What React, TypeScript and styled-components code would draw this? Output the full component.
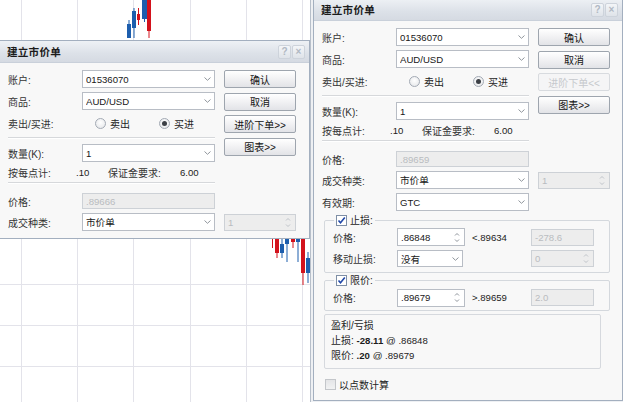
import React from 'react';
import styled, { createGlobalStyle } from 'styled-components';

const FONT = `"Liberation Sans", "Noto Sans CJK SC", sans-serif`;

const GlobalStyle = createGlobalStyle`
  html, body { margin: 0; padding: 0; background: #ffffff; }
  body { font-family: ${FONT}; }
  * { box-sizing: border-box; }
`;

const Desktop = styled.div`
  position: relative;
  width: 623px;
  height: 402px;
  overflow: hidden;
  background: #eef0f3;
  font-family: ${FONT};
`;

const ChartPane = styled.div`
  position: absolute;
  left: 0;
  top: 0;
  width: 311px;
  height: 402px;
  background: #ffffff;
  border-right: 1px solid #b7bfca;
`;

const Window = styled.div<{ $left: number; $top: number; $height: number }>`
  position: absolute;
  left: ${(p) => p.$left}px;
  top: ${(p) => p.$top}px;
  width: ${(p) => (p.$left < 0 ? 311 : 310)}px;
  height: ${(p) => p.$height}px;
  background: #f8f8f8;
  border: 1px solid #a3afbf;
  display: flex;
  flex-direction: column;
  overflow: hidden;
`;

const TitleBar = styled.div`
  height: 22px;
  flex: none;
  display: flex;
  align-items: center;
  padding: 0 4px 0 7px;
  background: linear-gradient(#eef1f5, #dce1e8 60%, #d5dae2);
  border-bottom: 1px solid #c9d0da;
`;

const TitleText = styled.span`
  flex: 1;
  font-size: 10.6px;
  font-weight: bold;
  color: #1b1b1b;
  letter-spacing: 0.2px;
`;

const TitleButton = styled.span`
  width: 13px;
  height: 14px;
  margin-left: 1px;
  border: 1px solid #cdd3db;
  border-radius: 2px;
  background: linear-gradient(#f3f5f8, #dfe3e9);
  color: #b0b8c3;
  font-size: 10px;
  line-height: 12px;
  text-align: center;
  font-weight: bold;
`;

const Body = styled.div`
  flex: 1;
  padding: 7px 8px 0 8px;
  display: flex;
  flex-direction: column;
`;

const TopBlock = styled.div`
  display: flex;
  gap: 9px;
`;

const FormCol = styled.div`
  width: 207px;
  display: flex;
  flex-direction: column;
`;

const ButtonCol = styled.div`
  width: 72px;
  display: flex;
  flex-direction: column;
  gap: 4.5px;
`;

const Row = styled.div<{ $h?: number; $mb?: number }>`
  display: flex;
  align-items: center;
  height: ${(p) => p.$h ?? 18}px;
  margin-bottom: ${(p) => p.$mb ?? 4}px;
  flex: none;
`;

const Label = styled.span<{ $w?: number }>`
  width: ${(p) => p.$w ?? 74}px;
  flex: none;
  font-size: 10px;
  color: #343434;
  white-space: nowrap;
`;

const Separator = styled.div<{ $mt: number; $mb: number }>`
  height: 2px;
  flex: none;
  margin-top: ${(p) => p.$mt}px;
  margin-bottom: ${(p) => p.$mb}px;
  border-top: 1px solid #d6d8db;
  border-bottom: 1px solid #ffffff;
`;

const ComboBox = styled.div<{ $w: number; $h?: number }>`
  width: ${(p) => p.$w}px;
  height: ${(p) => p.$h ?? 18}px;
  flex: none;
  display: flex;
  align-items: center;
  background: #ffffff;
  border: 1px solid #b8bdc5;
  padding-left: 3px;
`;

const FieldText = styled.span<{ $muted?: boolean }>`
  flex: 1;
  font-size: 9.6px;
  color: ${(p) => (p.$muted ? '#b9bcc0' : '#181818')};
  white-space: nowrap;
  overflow: hidden;
`;

const ArrowZone = styled.span`
  width: 14px;
  flex: none;
  display: flex;
  align-items: center;
  justify-content: center;
`;

const DisabledBox = styled.div<{ $w: number; $h?: number; $ml?: number }>`
  width: ${(p) => p.$w}px;
  height: ${(p) => p.$h ?? 16}px;
  margin-left: ${(p) => p.$ml ?? 0}px;
  flex: none;
  display: flex;
  align-items: center;
  background: #ededed;
  border: 1px solid #cdd1d6;
  padding-left: 3px;
`;

const SpinBox = styled.div<{ $w: number }>`
  width: ${(p) => p.$w}px;
  height: 18px;
  flex: none;
  display: flex;
  align-items: center;
  background: #ffffff;
  border: 1px solid #b8bdc5;
  padding-left: 3px;
`;

const PushButton = styled.div<{ $disabled?: boolean }>`
  width: 72px;
  height: 18px;
  flex: none;
  display: flex;
  align-items: center;
  justify-content: center;
  border: 1px solid ${(p) => (p.$disabled ? '#d8dbdf' : '#9ea5ae')};
  border-radius: 2px;
  background: ${(p) => (p.$disabled ? '#f5f5f6' : 'linear-gradient(#ffffff, #f1f1f3 50%, #e2e3e7)')};
  font-size: 10px;
  color: ${(p) => (p.$disabled ? '#c6c9cd' : '#141414')};
  white-space: nowrap;
`;

const RadioGroup = styled.div`
  display: flex;
  padding-left: 13px;
`;

const RadioItem = styled.div`
  width: 64px;
  display: flex;
  align-items: center;
  gap: 4px;
  font-size: 10px;
  color: #242424;
`;

const RadioDot = styled.span<{ $on?: boolean }>`
  width: 11px;
  height: 11px;
  border-radius: 50%;
  border: 1px solid #a3aab4;
  background: radial-gradient(circle at 50% 40%, #ffffff, #e2e4e7);
  display: flex;
  align-items: center;
  justify-content: center;
  &::after {
    content: '';
    display: ${(p) => (p.$on ? 'block' : 'none')};
    width: 5px;
    height: 5px;
    border-radius: 50%;
    background: #3b3f45;
  }
`;

const InfoRow = styled.div`
  display: grid;
  grid-template-columns: 68px 32px 72px auto;
  align-items: center;
  height: 16px;
  margin-bottom: 0;
  font-size: 10px;
  color: #343434;
  white-space: nowrap;
`;

const Value = styled.span<{ $bold?: boolean }>`
  font-size: 9.6px;
  color: #1c1c1c;
  font-weight: ${(p) => (p.$bold ? 'bold' : 'normal')};
`;

const Group = styled.fieldset<{ $mt: number; $pt: number; $pb: number }>`
  margin: ${(p) => p.$mt}px 0 0 2px;
  width: 286px;
  min-width: 0;
  padding: ${(p) => p.$pt}px 7px ${(p) => p.$pb}px 8px;
  border: 1px solid #d4d8dd;
  border-radius: 2px;
  flex: none;
`;

const GroupLegend = styled.legend`
  margin-left: 1px;
  padding: 0 2px;
  height: 13px;
  line-height: 13px;
`;

const LegendInner = styled.span`
  display: inline-flex;
  align-items: center;
  gap: 3px;
  height: 13px;
  font-size: 10px;
  color: #242424;
  vertical-align: top;
`;

const CheckBox = styled.span<{ $on?: boolean; $disabled?: boolean }>`
  width: 11px;
  height: 11px;
  flex: none;
  border: 1px solid ${(p) => (p.$disabled ? '#c3c6ca' : '#7f8fa6')};
  background: ${(p) => (p.$disabled ? 'linear-gradient(#e4e5e7, #f1f2f3)' : '#ffffff')};
  display: flex;
  align-items: center;
  justify-content: center;
`;

const Note = styled.span`
  width: 66px;
  flex: none;
  padding-left: 7px;
  font-size: 9.6px;
  color: #222;
`;

const ResultBox = styled.div`
  margin: 3px 0 0 2px;
  width: 277px;
  padding: 3px 6px 5px 6px;
  border: 1px solid #d6d9de;
  border-radius: 2px;
  flex: none;
`;

const ResultLine = styled.div`
  height: 15px;
  line-height: 15px;
  font-size: 10px;
  color: #242424;
  white-space: nowrap;
`;

const FooterCheck = styled.div`
  margin: 9px 0 0 3px;
  height: 13px;
  display: flex;
  align-items: center;
  gap: 3px;
  font-size: 10px;
  color: #242424;
`;

const ChartSvg = styled.svg`
  display: block;
`;

const ChevronDown: React.FC<{ color?: string }> = ({ color = '#8f959c' }) => (
  <svg width="7" height="4" viewBox="0 0 7 4">
    <path d="M0.5 0.5 L3.5 3.3 L6.5 0.5" fill="none" stroke={color} strokeWidth="1" />
  </svg>
);

const SpinArrows: React.FC<{ color?: string }> = ({ color = '#8f959c' }) => (
  <svg width="6" height="11" viewBox="0 0 6 11">
    <path d="M1 3.5 L3 1.5 L5 3.5 M1 7.5 L3 9.5 L5 7.5" fill="none" stroke={color} strokeWidth="1" />
  </svg>
);

const CheckMark = () => (
  <svg width="9" height="9" viewBox="0 0 9 9">
    <path d="M1.5 4.5 L3.5 6.8 L7.8 1.6" fill="none" stroke="#2148a8" strokeWidth="1.6" />
  </svg>
);

const Combo: React.FC<{ w: number; value: string; h?: number }> = ({ w, value, h }) => (
  <ComboBox $w={w} $h={h}>
    <FieldText>{value}</FieldText>
    <ArrowZone>
      <ChevronDown />
    </ArrowZone>
  </ComboBox>
);

const Spin: React.FC<{ w: number; value: string }> = ({ w, value }) => (
  <SpinBox $w={w}>
    <FieldText>{value}</FieldText>
    <ArrowZone>
      <SpinArrows />
    </ArrowZone>
  </SpinBox>
);

const DisabledField: React.FC<{ w: number; value: string; h?: number; ml?: number; arrows?: boolean }> = ({
  w,
  value,
  h,
  ml,
  arrows,
}) => (
  <DisabledBox $w={w} $h={h} $ml={ml}>
    <FieldText $muted>{value}</FieldText>
    {arrows && (
      <ArrowZone>
        <SpinArrows color="#c0c4c9" />
      </ArrowZone>
    )}
  </DisabledBox>
);

type Candle = { x: number; w: number; bt: number; bb: number; wt: number; wb: number; red: boolean };

const candles: Candle[] = [
  { x: 127, w: 4, bt: 24, bb: 38, wt: 20, wb: 38, red: false },
  { x: 132, w: 4, bt: 11, bb: 28, wt: 8, wb: 38, red: false },
  { x: 137, w: 3, bt: 14, bb: 20, wt: 8, wb: 25, red: true },
  { x: 142, w: 5, bt: 0, bb: 19, wt: 0, wb: 22, red: false },
  { x: 147, w: 4, bt: 0, bb: 31, wt: 0, wb: 38, red: true },
  { x: 272, w: 1, bt: 236, bb: 248, wt: 236, wb: 248, red: true },
  { x: 275, w: 4, bt: 236, bb: 253, wt: 236, wb: 258, red: true },
  { x: 280, w: 4, bt: 244, bb: 253, wt: 236, wb: 258, red: false },
  { x: 285, w: 4, bt: 239, bb: 244, wt: 236, wb: 262, red: false },
  { x: 291, w: 4, bt: 236, bb: 242, wt: 236, wb: 248, red: true },
  { x: 296, w: 4, bt: 236, bb: 242, wt: 236, wb: 262, red: false },
  { x: 301, w: 4, bt: 236, bb: 273, wt: 236, wb: 285, red: true },
  { x: 306, w: 4, bt: 258, bb: 273, wt: 252, wb: 283, red: false },
];

const Chart = () => {
  const vx = [21, 77, 133, 190, 246, 302];
  const hy = [284, 325, 366];
  return (
    <ChartSvg width="310" height="402" viewBox="0 0 310 402">
      {vx.map((x) => (
        <line key={'v' + x} x1={x + 0.5} y1={0} x2={x + 0.5} y2={402} stroke="#e3e3ea" strokeWidth="1" />
      ))}
      {hy.map((y) => (
        <line key={'h' + y} x1={0} y1={y + 0.5} x2={310} y2={y + 0.5} stroke="#e3e3ea" strokeWidth="1" />
      ))}
      {candles.map((c, i) => {
        const col = c.red ? '#d3121c' : '#1d5ead';
        const cx = c.x + c.w / 2;
        return (
          <g key={i}>
            <line x1={cx} y1={c.wt} x2={cx} y2={c.wb} stroke={col} strokeWidth="1" />
            <rect x={c.x} y={c.bt} width={c.w} height={c.bb - c.bt} fill={col} />
          </g>
        );
      })}
      <rect x={103} y={236} width={5} height={2} fill="#d3121c" />
    </ChartSvg>
  );
};

const Title = () => (
  <TitleBar>
    <TitleText>建立市价单</TitleText>
    <TitleButton>?</TitleButton>
    <TitleButton>×</TitleButton>
  </TitleBar>
);

const TopSection: React.FC<{ advancedLabel: string; advancedDisabled?: boolean }> = ({
  advancedLabel,
  advancedDisabled,
}) => (
  <TopBlock>
    <FormCol>
      <Row>
        <Label>账户:</Label>
        <Combo w={133} value="01536070" />
      </Row>
      <Row>
        <Label>商品:</Label>
        <Combo w={133} value="AUD/USD" />
      </Row>
      <Row $mb={0}>
        <Label>卖出/买进:</Label>
        <RadioGroup>
          <RadioItem>
            <RadioDot />
            卖出
          </RadioItem>
          <RadioItem>
            <RadioDot $on />
            买进
          </RadioItem>
        </RadioGroup>
      </Row>
      <Separator $mt={5} $mb={5} />
      <Row $mb={2}>
        <Label>数量(K):</Label>
        <Combo w={133} value="1" />
      </Row>
      <InfoRow>
        <span>按每点计:</span>
        <Value>.10</Value>
        <span>保证金要求:</span>
        <Value>6.00</Value>
      </InfoRow>
      <Separator $mt={2} $mb={9} />
    </FormCol>
    <ButtonCol>
      <PushButton>确认</PushButton>
      <PushButton>取消</PushButton>
      <PushButton $disabled={advancedDisabled}>{advancedLabel}</PushButton>
      <PushButton>图表&gt;&gt;</PushButton>
    </ButtonCol>
  </TopBlock>
);

const PriceAndType: React.FC<{ price: string }> = ({ price }) => (
  <>
    <Row $h={16}>
      <Label>价格:</Label>
      <DisabledField w={133} value={price} />
    </Row>
    <Row>
      <Label>成交种类:</Label>
      <Combo w={133} value="市价单" />
      <DisabledField w={72} h={17} ml={9} value="1" arrows />
    </Row>
  </>
);

export default function App() {
  return (
    <>
      <GlobalStyle />
      <Desktop>
        <ChartPane>
          <Chart />
        </ChartPane>

        <Window $left={-1} $top={40} $height={199}>
          <Title />
          <Body>
            <TopSection advancedLabel="进阶下单>>" />
            <PriceAndType price=".89666" />
          </Body>
        </Window>

        <Window $left={313} $top={-2} $height={403}>
          <Title />
          <Body>
            <TopSection advancedLabel="进阶下单<<" advancedDisabled />
            <PriceAndType price=".89659" />
            <Row $mb={0}>
              <Label>有效期:</Label>
              <Combo w={133} value="GTC" />
            </Row>

            <Group $mt={3} $pt={1} $pb={5}>
              <GroupLegend>
                <LegendInner>
                  <CheckBox $on>
                    <CheckMark />
                  </CheckBox>
                  止损:
                </LegendInner>
              </GroupLegend>
              <Row>
                <Label $w={64}>价格:</Label>
                <Spin w={68} value=".86848" />
                <Note>&lt;.89634</Note>
                <DisabledField w={63} h={17} value="-278.6" />
              </Row>
              <Row $h={17} $mb={0}>
                <Label $w={64}>移动止损:</Label>
                <Combo w={66} h={17} value="没有" />
                <Note />
                <DisabledField w={63} h={17} ml={2} value="0" arrows />
              </Row>
            </Group>

            <Group $mt={1} $pt={2} $pb={4}>
              <GroupLegend>
                <LegendInner>
                  <CheckBox $on>
                    <CheckMark />
                  </CheckBox>
                  限价:
                </LegendInner>
              </GroupLegend>
              <Row $h={17} $mb={0}>
                <Label $w={64}>价格:</Label>
                <Spin w={68} value=".89679" />
                <Note>&gt;.89659</Note>
                <DisabledField w={63} h={17} value="2.0" />
              </Row>
            </Group>

            <ResultBox>
              <ResultLine>盈利/亏损</ResultLine>
              <ResultLine>
                止损: <Value $bold>-28.11</Value> <Value>@ .86848</Value>
              </ResultLine>
              <ResultLine>
                限价: <Value $bold>.20</Value> <Value>@ .89679</Value>
              </ResultLine>
            </ResultBox>

            <FooterCheck>
              <CheckBox $disabled />
              以点数计算
            </FooterCheck>
          </Body>
        </Window>
      </Desktop>
    </>
  );
}
